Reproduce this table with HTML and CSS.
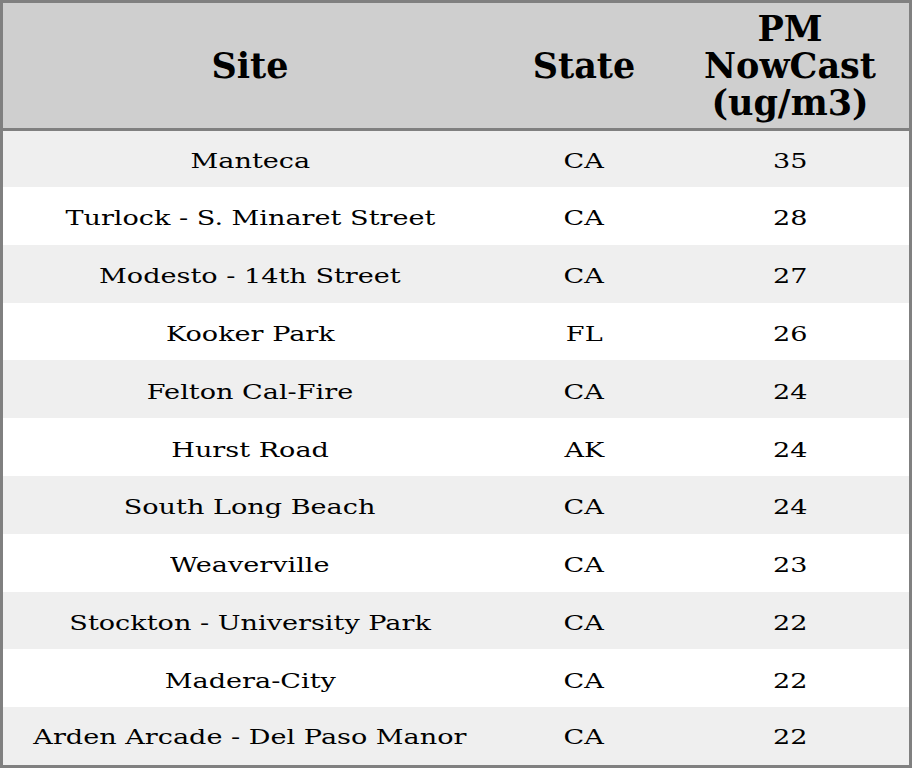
FILE: index.html
```html
<!DOCTYPE html>
<html>
<head>
<meta charset="utf-8">
<link rel="stylesheet" href="styles.css">
</head>
<body>
<table class="aq">
  <thead>
    <tr>
      <th class="c-site">Site</th>
      <th class="c-state">State</th>
      <th class="c-pm">PM<br>NowCast<br>(ug/m3)</th>
    </tr>
  </thead>
  <tbody>
    <tr><td><span class="t">Manteca</span></td><td><span class="t">CA</span></td><td><span class="t">35</span></td></tr>
    <tr><td><span class="t">Turlock - S. Minaret Street</span></td><td><span class="t">CA</span></td><td><span class="t">28</span></td></tr>
    <tr><td><span class="t">Modesto - 14th Street</span></td><td><span class="t">CA</span></td><td><span class="t">27</span></td></tr>
    <tr><td><span class="t">Kooker Park</span></td><td><span class="t">FL</span></td><td><span class="t">26</span></td></tr>
    <tr><td><span class="t">Felton Cal-Fire</span></td><td><span class="t">CA</span></td><td><span class="t">24</span></td></tr>
    <tr><td><span class="t">Hurst Road</span></td><td><span class="t">AK</span></td><td><span class="t">24</span></td></tr>
    <tr><td><span class="t">South Long Beach</span></td><td><span class="t">CA</span></td><td><span class="t">24</span></td></tr>
    <tr><td><span class="t">Weaverville</span></td><td><span class="t">CA</span></td><td><span class="t">23</span></td></tr>
    <tr><td><span class="t">Stockton - University Park</span></td><td><span class="t">CA</span></td><td><span class="t">22</span></td></tr>
    <tr><td><span class="t">Madera-City</span></td><td><span class="t">CA</span></td><td><span class="t">22</span></td></tr>
    <tr><td><span class="t">Arden Arcade - Del Paso Manor</span></td><td><span class="t">CA</span></td><td><span class="t">22</span></td></tr>
  </tbody>
</table>
</body>
</html>
```

FILE: styles.css
```css
html, body {
  margin: 0;
  padding: 0;
  background: #ffffff;
}
.aq {
  width: 912px;
  border-collapse: collapse;
  border: 3px solid #808080;
  font-family: "DejaVu Serif", serif;
  color: #000;
  table-layout: fixed;
}
.aq th {
  background: #cfcfcf;
  font-weight: bold;
  font-size: 35px;
  line-height: 37px;
  height: 125px;
  padding: 0;
  text-align: center;
  vertical-align: middle;
  border-bottom: 3px solid #808080;
}
.c-site { width: 494px; }
.c-state { width: 174px; }
.c-pm { width: 238px; }
.aq tbody tr {
  height: 57.8px;
}
.aq tbody tr:first-child {
  height: 57.5px;
}
.aq tbody tr:last-child {
  height: 59.3px;
}
.aq td {
  font-size: 21px;
  line-height: 25px;
  padding: 6px 0 0 0;
  text-align: center;
  vertical-align: middle;
}
.aq tbody tr:first-child td {
  padding-top: 5px;
}
.aq tbody tr:last-child td {
  padding-top: 3px;
}
.t {
  display: inline-block;
  transform: scaleX(1.29);
  white-space: nowrap;
}
.aq tbody tr:nth-child(odd) td {
  background: #efefef;
}
.aq tbody tr:nth-child(even) td {
  background: #ffffff;
}
```
